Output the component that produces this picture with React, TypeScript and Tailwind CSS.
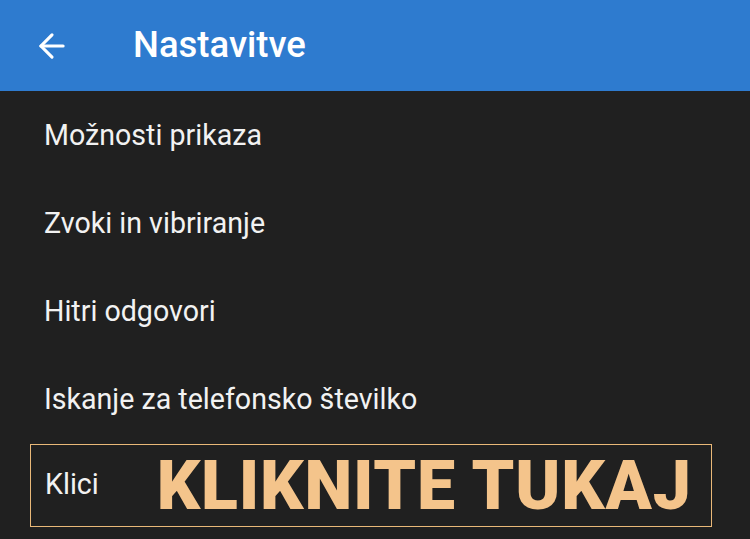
import { ArrowLeft } from "lucide-react"

const items = [
  "Možnosti prikaza",
  "Zvoki in vibriranje",
  "Hitri odgovori",
  "Iskanje za telefonsko številko",
]

export default function App() {
  return (
    <div className="w-[750px] h-[539px] overflow-hidden bg-[#202020] font-['Roboto','Noto_Sans',sans-serif]">
      {/* Toolbar */}
      <header className="h-[91px] bg-[#2e7bcf] flex items-center">
        <ArrowLeft className="ml-[33px] w-[38px] h-[38px] text-white" strokeWidth={2} />
        <h1 className="ml-[62px] text-[36.5px] font-medium text-white leading-none">Nastavitve</h1>
      </header>

      {/* Settings list */}
      <ul>
        {items.map((item) => (
          <li key={item} className="h-[88px] flex items-center pl-[44px] text-[28.6px] text-[#f2f2f2]">
            {item}
          </li>
        ))}
        <li className="ml-[30px] w-[682px] mt-[1px] h-[83px] border border-[#e9b878] flex items-center pl-[14px]">
          <span className="text-[28.6px] text-[#f2f2f2] mt-[-2px]">Klici</span>
          <span className="ml-[58px] text-[68px] font-black text-[#f4c48b] leading-none tracking-[0.8px]">
            KLIKNITE TUKAJ
          </span>
        </li>
      </ul>
    </div>
  )
}
